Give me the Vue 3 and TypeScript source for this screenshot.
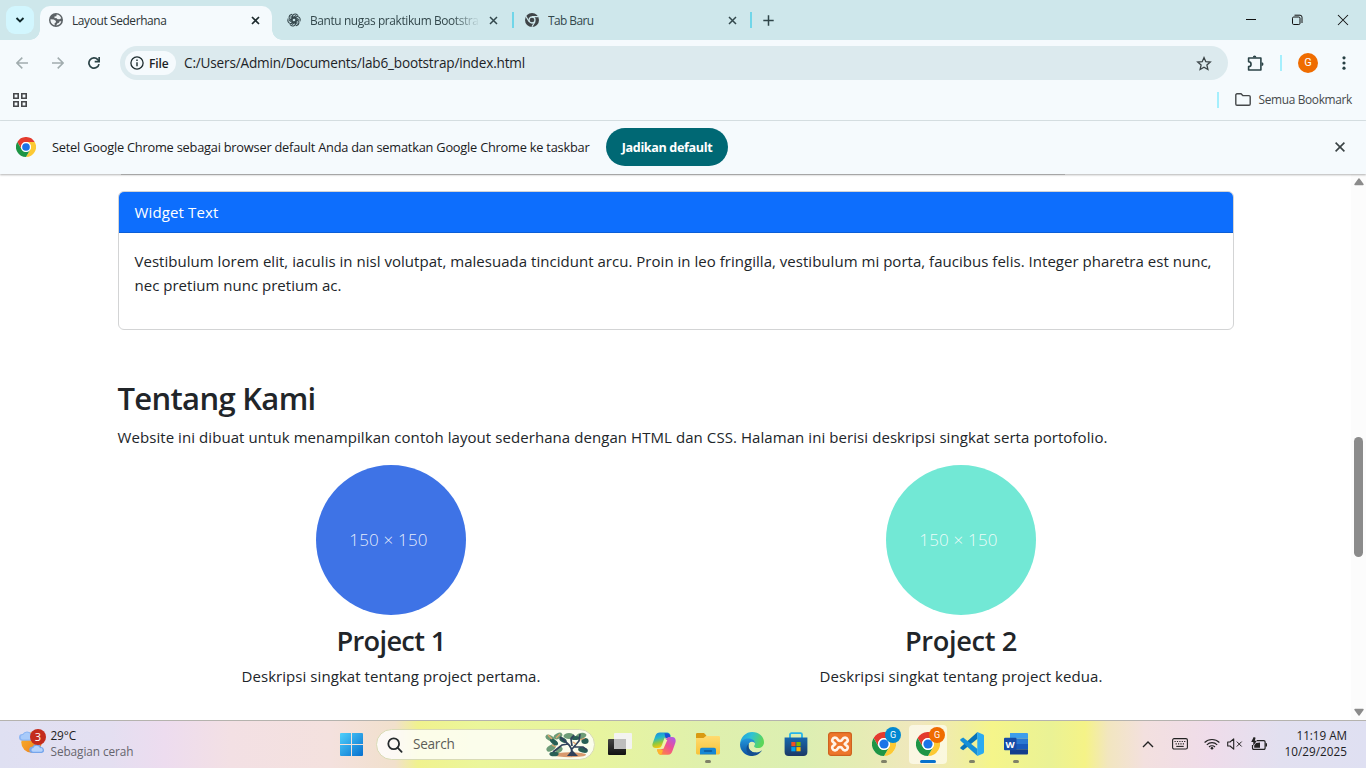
<script setup lang="ts">
import type { Directive } from 'vue'

// Spreads a line of text over a fixed advance width through its letter spacing.
const vFit: Directive<HTMLElement, number> = {
  mounted(el, { value }) {
    const natural = el.getBoundingClientRect().width
    const count = (el.textContent ?? '').length
    el.style.letterSpacing = `${((value - natural) / count).toFixed(4)}px`
  },
}

interface Project {
  title: string
  titleWidth: number
  text: string
  textWidth: number
  tone: string
}

const projects: Project[] = [
  { title: 'Project 1', titleWidth: 109, text: 'Deskripsi singkat tentang project pertama.', textWidth: 299, tone: 'blue' },
  { title: 'Project 2', titleWidth: 112, text: 'Deskripsi singkat tentang project kedua.', textWidth: 283, tone: 'mint' },
]

const chromes = [
  { letter: 'G', tone: 'sea', active: false },
  { letter: 'G', tone: 'orange', active: true },
]
</script>

<template>
  <div class="screen">
    <svg class="defs" width="0" height="0" aria-hidden="true">
      <defs>
        <symbol id="chrome" viewBox="0 0 48 48">
          <circle cx="24" cy="24" r="24" fill="#fff" />
          <path d="M3.2 12A24 24 0 0 1 44.8 12H24A12 12 0 0 0 13.6 30Z" fill="#e33b2e" />
          <path d="M44.8 12A24 24 0 0 1 24 48L34.4 30A12 12 0 0 0 24 12Z" fill="#fcc934" />
          <path d="M24 48A24 24 0 0 1 3.2 12L13.6 30A12 12 0 0 0 34.4 30Z" fill="#1e9545" />
          <circle cx="24" cy="24" r="11.8" fill="#fff" />
          <circle cx="24" cy="24" r="9.2" fill="#1a73e8" />
        </symbol>
        <linearGradient id="gWin" x1="0" y1="0" x2="1" y2="1">
          <stop offset="0" stop-color="#4fd0fb" /><stop offset="1" stop-color="#0670cf" />
        </linearGradient>
        <linearGradient id="gDark" x1="0" y1="0" x2="0" y2="1">
          <stop offset="0" stop-color="#444" /><stop offset="1" stop-color="#111" />
        </linearGradient>
        <linearGradient id="gCop1" x1="0" y1="0" x2="0.3" y2="1">
          <stop offset="0" stop-color="#1783e6" /><stop offset=".4" stop-color="#22b8c9" /><stop offset=".7" stop-color="#8fc93c" /><stop offset="1" stop-color="#fdc60a" />
        </linearGradient>
        <linearGradient id="gCop2" x1="1" y1="0" x2="0.2" y2="1">
          <stop offset="0" stop-color="#a45df0" /><stop offset=".5" stop-color="#ee4f94" /><stop offset="1" stop-color="#ff8a3c" />
        </linearGradient>
        <linearGradient id="gFold" x1="0" y1="0" x2="0" y2="1">
          <stop offset="0" stop-color="#ffdb70" /><stop offset="1" stop-color="#f8c33a" />
        </linearGradient>
        <linearGradient id="gEdge" x1="0" y1="0" x2="1" y2="0.3">
          <stop offset="0" stop-color="#1b9de0" /><stop offset=".5" stop-color="#2fc2d4" /><stop offset="1" stop-color="#5bd65a" />
        </linearGradient>
        <linearGradient id="gEdge2" x1="0" y1="0" x2="0" y2="1">
          <stop offset="0" stop-color="#2397dc" /><stop offset="1" stop-color="#0b4f9e" />
        </linearGradient>
        <linearGradient id="gStore" x1="0" y1="0" x2="0" y2="1">
          <stop offset="0" stop-color="#1668ae" /><stop offset="1" stop-color="#1c3966" />
        </linearGradient>
        <linearGradient id="gSun" x1="0" y1="0" x2="1" y2="1">
          <stop offset="0" stop-color="#f8b52c" /><stop offset="1" stop-color="#ee7a1c" />
        </linearGradient>
      </defs>
    </svg>

    <header class="tabs">
      <button class="tabsearch"><svg width="10" height="8" viewBox="0 0 10 8"><path d="M1.5 2 5 5.5 8.5 2" fill="none" stroke="#10292c" stroke-width="1.9" /></svg></button>
      <div class="tab active">
        <svg class="fav" width="14" height="14" viewBox="0 0 14 14">
          <circle cx="7" cy="7" r="7" fill="#5c6266" />
          <path d="M7.6 1.6C9.6 1.7 11.6 3 12.3 5.2L10.6 6.3H8.6L7.2 5 5.6 5.2 5.4 3.6 7.4 3.2Z" fill="#f0f4f6" />
          <path d="M1.5 6.3 4.8 6.6 7 7.9 6.8 9.4 5.6 10.2 5.7 12.3C3.2 11.8 1.3 9.4 1.5 6.3Z" fill="#f0f4f6" />
          <path d="M7.2 12.5 8.2 10.5 10 9.8 10.6 8.3H12.3C11.8 10.6 9.8 12.5 7.2 12.5Z" fill="#f0f4f6" />
        </svg>
        <span class="label"><span v-fit="94.5">Layout Sederhana</span></span>
        <svg class="x" width="9" height="9" viewBox="0 0 9 9"><path d="M1 1 8 8M8 1 1 8" stroke="#1d2b2e" stroke-width="1.7" /></svg>
      </div>
      <div class="tab second">
        <svg class="fav" width="14" height="14" viewBox="-7 -7 14 14" fill="none" stroke="#33454a" stroke-width="1.05">
          <g v-for="a in 6" :key="a" :transform="`rotate(${a * 60})`">
            <path d="M-1.8 3.1V-2.9A3 3 0 0 1 3.3 -5.1L4.2 -4.4M-1.8-2.2 2.2-4.6" />
          </g>
        </svg>
        <span class="label fade"><span v-fit="168.5">Bantu nugas praktikum Bootstra</span></span>
        <svg class="x" width="9" height="9" viewBox="0 0 9 9"><path d="M1 1 8 8M8 1 1 8" stroke="#33484c" stroke-width="1.5" /></svg>
      </div>
      <i class="sep"></i>
      <div class="tab third">
        <svg class="fav" width="14" height="14" viewBox="0 0 14 14">
          <circle cx="7" cy="7" r="7" fill="#3f4447" />
          <circle cx="7" cy="7" r="3" fill="none" stroke="#cee7eb" stroke-width="1.3" />
          <path d="M7 3.6H13.3M4 8.5.9 3.3M10 8.7 6.9 13.7" stroke="#cee7eb" stroke-width="1.2" />
        </svg>
        <span class="label"><span v-fit="45.5">Tab Baru</span></span>
        <svg class="x" width="9" height="9" viewBox="0 0 9 9"><path d="M1 1 8 8M8 1 1 8" stroke="#33484c" stroke-width="1.5" /></svg>
      </div>
      <i class="sep"></i>
      <svg class="plus" width="11" height="11" viewBox="0 0 11 11"><path d="M5.5.3V10.7M.3 5.5H10.7" stroke="#2f4549" stroke-width="1.5" /></svg>
      <div class="win">
        <svg class="min" width="10" height="12" viewBox="0 0 10 12"><path d="M0 5.5H10" stroke="#111" /></svg>
        <svg width="12" height="12" viewBox="0 0 12 12" fill="none" stroke="#111"><rect x="1.5" y="3" width="7.5" height="7.5" rx="1.2" /><path d="M3.5 1.2H9a2 2 0 0 1 2 2V9" /></svg>
        <svg width="12" height="12" viewBox="0 0 12 12"><path d="M1 1 11 11M11 1 1 11" stroke="#111" stroke-width="1.05" /></svg>
      </div>
    </header>

    <div class="toolbar">
      <svg class="nav" width="12" height="12" viewBox="0 0 12 12" fill="none" stroke="#a1acae" stroke-width="1.5"><path d="M6.3.6.9 6l5.4 5.4M1 6H12" /></svg>
      <svg class="nav" width="12" height="12" viewBox="0 0 12 12" fill="none" stroke="#a1acae" stroke-width="1.5"><path d="M5.7.6 11.1 6l-5.4 5.4M11 6H0" /></svg>
      <svg class="nav" width="12" height="12" viewBox="0 0 12 12" fill="none" stroke="#2b4347" stroke-width="1.7"><path d="M11 7.1A5.1 5.1 0 1 1 9.8 2.6L11 4.2" /><path d="M11.2 0V4.6H6.7" /></svg>
      <div class="omni">
        <div class="chip">
          <svg width="14" height="14" viewBox="0 0 14 14"><circle cx="7" cy="7" r="6.1" fill="none" stroke="#1c2b2e" stroke-width="1.3" /><path d="M7 6.2V10.2M7 3.6V5" stroke="#1c2b2e" stroke-width="1.4" /></svg>
          <span v-fit="19.5">File</span>
        </div>
        <span class="url"><span v-fit="341">C:/Users/Admin/Documents/lab6_bootstrap/index.html</span></span>
        <svg class="star" width="16" height="15" viewBox="0 0 16 15"><path d="M8 1.6 9.8 5.7 14.3 6.1 10.9 9.1 11.9 13.5 8 11.2 4.1 13.5 5.1 9.1 1.7 6.1 6.2 5.7Z" fill="none" stroke="#3b4447" stroke-width="1.3" /></svg>
      </div>
      <svg class="puzzle" width="17" height="17" viewBox="0 0 17 17"><path d="M1.6 3H13.9V15H1.6V11.6A2.2 2.2 0 0 0 1.6 6.7Z" fill="none" stroke="#2b4347" stroke-width="1.6" stroke-linejoin="round" /><path d="M5.8 2.4a1.8 1.8 0 0 1 3.6 0ZM14.6 7.2a1.9 1.9 0 0 1 0 3.8Z" fill="#2b4347" /></svg>
      <i class="sep pale"></i>
      <span class="avatar">G</span>
      <svg class="dots" width="4" height="14" viewBox="0 0 4 14" fill="#263f43"><circle cx="2" cy="1.8" r="1.6" /><circle cx="2" cy="7" r="1.6" /><circle cx="2" cy="12.2" r="1.6" /></svg>
    </div>

    <div class="bookmarks">
      <svg width="16" height="16" viewBox="0 0 16 16" fill="none" stroke="#46484b" stroke-width="1.6"><path d="M1.8 1.8H6.2V6.2H1.8ZM9.8 1.8H14.2V6.2H9.8ZM1.8 9.8H6.2V14.2H1.8ZM9.8 9.8H14.2V14.2H9.8Z" /></svg>
      <div class="allmarks">
        <i class="sep pale"></i>
        <svg width="16" height="13" viewBox="0 0 16 13"><path d="M.8 2A1.2 1.2 0 0 1 2 .8H6L7.8 2.6H14A1.2 1.2 0 0 1 15.2 3.8V11A1.2 1.2 0 0 1 14 12.2H2A1.2 1.2 0 0 1 .8 11Z" fill="none" stroke="#45484a" stroke-width="1.4" /></svg>
        <span v-fit="93.5">Semua Bookmark</span>
      </div>
    </div>

    <div class="infobar">
      <svg width="20" height="20"><use href="#chrome" /></svg>
      <span class="msg"><span v-fit="537.5">Setel Google Chrome sebagai browser default Anda dan sematkan Google Chrome ke taskbar</span></span>
      <button class="default"><span v-fit="90.5">Jadikan default</span></button>
      <svg class="close" width="10" height="10" viewBox="0 0 10 10"><path d="M.6.6 9.4 9.4M9.4.6.6 9.4" stroke="#3a4244" stroke-width="1.6" /></svg>
    </div>

    <div class="viewport">
      <main>
        <hr class="edge" />
        <section class="card">
          <h5><span v-fit="84">Widget Text</span></h5>
          <p>
            <span v-fit="1077">Vestibulum lorem elit, iaculis in nisl volutpat, malesuada tincidunt arcu. Proin in leo fringilla, vestibulum mi porta, faucibus felis. Integer pharetra est nunc,</span><br />
            <span v-fit="207">nec pretium nunc pretium ac.</span>
          </p>
        </section>
        <h2><span v-fit="198">Tentang Kami</span></h2>
        <p class="lead"><span v-fit="990">Website ini dibuat untuk menampilkan contoh layout sederhana dengan HTML dan CSS. Halaman ini berisi deskripsi singkat serta portofolio.</span></p>
        <div class="row">
          <article v-for="p in projects" :key="p.title">
            <div class="disc" :class="p.tone"><span v-fit="78.5">150 × 150</span></div>
            <h3><span v-fit="p.titleWidth">{{ p.title }}</span></h3>
            <p><span v-fit="p.textWidth">{{ p.text }}</span></p>
          </article>
        </div>
      </main>
      <div class="scroll">
        <svg width="10" height="8" viewBox="0 0 10 8"><path d="M5 1 9 6.5H1Z" fill="#8b8b8b" stroke="#8b8b8b" stroke-width="1.4" stroke-linejoin="round" /></svg>
        <i class="thumb"></i>
        <svg class="down" width="10" height="8" viewBox="0 0 10 8"><path d="M5 7 1 1.5H9Z" fill="#8b8b8b" stroke="#8b8b8b" stroke-width="1.4" stroke-linejoin="round" /></svg>
      </div>
    </div>

    <footer class="taskbar">
      <div class="weather">
        <svg width="28" height="28" viewBox="0 0 28 28">
          <circle cx="12.5" cy="15.5" r="10.2" fill="url(#gSun)" />
          <path d="M3.3 13.8A3.4 3.4 0 0 1 3.6 7 5 5 0 0 1 12.6 7.5 3.2 3.2 0 0 1 14 13.8Z" fill="#8cb6f4" />
          <path d="M3.7 12.6A2.3 2.3 0 0 1 4.2 8 4 4 0 0 1 11.8 8.5V12.6Z" fill="#a9cbfa" />
          <path d="M13.3 26A3.1 3.1 0 0 1 13.4 19.8 4.6 4.6 0 0 1 22 20.1 3 3 0 0 1 22.8 26Z" fill="#77a6ec" />
          <path d="M13.8 24.8A2 2 0 0 1 14.3 20.9 3.6 3.6 0 0 1 21.1 21.3 1.8 1.8 0 0 1 22.5 24.8Z" fill="#b5d3fc" />
        </svg>
        <b class="badge">3</b>
        <div class="wtext"><span v-fit="25.5">29°C</span><small v-fit="83">Sebagian cerah</small></div>
      </div>
      <svg class="start" width="23" height="23" viewBox="0 0 23 23"><path d="M0 1A1 1 0 0 1 1 0H11V11H0ZM12 0H22A1 1 0 0 1 23 1V11H12ZM0 12H11V23H1A1 1 0 0 1 0 22ZM12 12H23V22A1 1 0 0 1 22 23H12Z" fill="url(#gWin)" /></svg>
      <div class="search">
        <svg width="16" height="16" viewBox="0 0 16 16" fill="none" stroke="#262b2d" stroke-width="1.8"><circle cx="6.7" cy="6.7" r="5.4" /><path d="M10.6 10.7 14.6 14.8" stroke-linecap="round" /></svg>
        <span v-fit="41.5">Search</span>
        <svg class="tree" width="44" height="26" viewBox="0 0 44 26" fill="none">
          <ellipse cx="25" cy="22.8" rx="16" ry="2.5" fill="#d99a6e" />
          <g fill="#6d9c77"><ellipse cx="5" cy="6" rx="4.8" ry="2.8" transform="rotate(25 5 6)" /><ellipse cx="13" cy="4" rx="4.6" ry="2.8" transform="rotate(-25 13 4)" /><ellipse cx="6" cy="16" rx="5" ry="2.8" transform="rotate(-30 6 16)" /><ellipse cx="24" cy="4" rx="5.5" ry="3" /><ellipse cx="36" cy="4" rx="5.5" ry="3" transform="rotate(-15 36 4)" /><ellipse cx="14" cy="18" rx="4" ry="2.4" transform="rotate(-35 14 18)" /></g>
          <g fill="#285f55"><ellipse cx="9" cy="10" rx="4.6" ry="2.3" transform="rotate(35 9 10)" /><ellipse cx="30" cy="6" rx="4.5" ry="2" /><ellipse cx="40" cy="9" rx="3.6" ry="3" /><ellipse cx="38" cy="18" rx="5" ry="2.6" transform="rotate(15 38 18)" /><ellipse cx="9" cy="22" rx="4.6" ry="2.3" /><ellipse cx="18" cy="8" rx="4" ry="2.2" transform="rotate(30 18 8)" /></g>
          <path d="M26 24C28 19 27 15 22 11L15 5M27 17 34 9 35 2M27 14 26 7 29 3M29 15 38 15 42 18M23 12 17 13 8 20" stroke="#30415a" stroke-width="1.7" />
          <path d="M22 24 27 18 33 24Z" fill="#30415a" />
          <path d="M3 3 7 7M15 2 11 6M28 10 31 12M7 13 11 15M35 8 40 6" stroke="#e1a36e" stroke-width="1.3" />
        </svg>
      </div>
      <nav class="apps">
        <div class="app"><svg width="24" height="24" viewBox="0 0 24 24"><rect x="0" y="7" width="18" height="16" rx="1" fill="url(#gDark)" /><rect x="6" y="1" width="18" height="16" rx="1" fill="#f3f3f1" /><path d="M6 7H18V17H6Z" fill="#bdbdbd" /></svg></div>
        <div class="app">
          <svg width="24" height="24" viewBox="0 0 24 24">
            <path d="M8 1.3H15.2C17 1.3 17.8 2.6 18.3 4.2L19 6H15.8C13.8 6 12.8 7.2 12.2 9L9.7 17.2C9 19.3 8 20.2 6 20.2H3.8C.7 20.2-.2 17.4.7 14.3L3.5 5.2C4.3 2.7 5.6 1.3 8 1.3Z" transform="translate(0 -.7) scale(1 .83)" fill="url(#gCop1)" />
            <path d="M12.5 1.3H15.2C17 1.3 17.7 2.3 18.2 4L18.8 6H15.5L13.5 6.5Z" fill="#1c50d4" />
            <path d="M16 22.7H8.8C7 22.7 6.2 21.4 5.7 19.8L5 17.5H8C10 17.5 11 16.5 11.6 14.7L14.2 7.5C14.9 5.5 16 5 18 5H20.2C23.3 5 24.3 7.8 23.3 11L20.5 18.8C19.7 21.3 18.4 22.7 16 22.7Z" fill="url(#gCop2)" />
            <path d="M12.8 8H15.3L11.5 16.8H9.2Z" fill="#f1f3a7" />
            <path d="M5 17.2H8.2L11 18.5 9.2 22.7C7 22.7 6.3 21.4 5.7 19.8Z" fill="#ffb52c" />
          </svg>
        </div>
        <div class="app">
          <svg width="24" height="24" viewBox="0 0 24 24"><path d="M0 2.2A1.2 1.2 0 0 1 1.2 1H8L10.3 3.5V8H0Z" fill="#d99a11" /><path d="M0 6H7.5L10 4H22.8A1.2 1.2 0 0 1 24 5.2V21A1.4 1.4 0 0 1 22.6 22.4H1.4A1.4 1.4 0 0 1 0 21Z" fill="url(#gFold)" /><path d="M4 22.4V17.5A1.8 1.8 0 0 1 5.8 15.7H18.2A1.8 1.8 0 0 1 20 17.5V22.4Z" fill="#1787d3" /><rect x="7.8" y="18.3" width="8.4" height="1.5" rx=".7" fill="#0b549b" /></svg>
          <i class="dot"></i>
        </div>
        <div class="app">
          <svg width="24" height="24" viewBox="0 0 24 24"><path d="M.1 11.7C.7 4.8 6 0 12.2 0 19 0 24 4.8 24 10.2 24 13.8 21.4 16 18 16 15.6 16 14.1 15.2 14.1 14.2 14.1 13.5 15 13.3 15 11.7 15 9.5 12.8 7.7 9.8 7.7 5 7.7.9 10 .1 11.7Z" fill="url(#gEdge)" /><path d="M0 12.6C.2 9.3 3.7 6.6 8.4 6.6 12.8 6.6 15.2 9.1 15 11.6 14.8 10.5 13.4 9.8 12 9.8 9.7 9.8 8.2 11.7 8.2 14.2 8.2 18.4 12.3 21 16.5 20.5 15 22.8 13.2 24 11.5 24 5.2 24 0 18.8 0 12.6Z" fill="url(#gEdge2)" /><path d="M8.9 11.7C7.6 16.5 11 20.6 16.2 20.6 18.7 20.6 20.9 19.5 22.1 18.1 20.5 21.5 16.6 24 12 24 6 22.5 4.7 14.5 8.9 11.7Z" fill="#124f90" /></svg>
        </div>
        <div class="app">
          <svg width="24" height="24" viewBox="0 0 24 24"><path d="M6 8V2.6A1.4 1.4 0 0 1 7.4 1.2H16.6A1.4 1.4 0 0 1 18 2.6V8" fill="none" stroke="#25b5ea" stroke-width="1.8" /><path d="M.6 5.5H23.4V20A4 4 0 0 1 19.4 24H4.6A4 4 0 0 1 .6 20Z" fill="url(#gStore)" /><path d="M7.3 10H11.5V14.2H7.3Z" fill="#f25022" /><path d="M12.4 10H16.6V14.2H12.4Z" fill="#7fba00" /><path d="M7.3 15.1H11.5V19.3H7.3Z" fill="#00a4ef" /><path d="M12.4 15.1H16.6V19.3H12.4Z" fill="#ffb900" /></svg>
        </div>
        <div class="app">
          <svg width="24" height="24" viewBox="0 0 24 24"><rect x=".6" y=".6" width="22.8" height="22.8" rx="2.5" fill="#ed762b" stroke="#ce631f" stroke-width="1.2" /><path d="M7.2 5.6C4.4 5.4 3.2 9 5.4 10.3L7.3 12 5.4 13.7C3.2 15 4.4 18.6 7.2 18.4 8.6 18.4 9.2 17.5 9.8 16.3 10.5 14.7 13.5 14.7 14.2 16.3 14.8 17.5 15.4 18.4 16.8 18.4 19.6 18.6 20.8 15 18.6 13.7L16.7 12 18.6 10.3C20.8 9 19.6 5.4 16.8 5.6 15.4 5.6 14.8 6.5 14.2 7.7 13.5 9.3 10.5 9.3 9.8 7.7 9.2 6.5 8.6 5.6 7.2 5.6Z" fill="none" stroke="#fff4e8" stroke-width="2.6" stroke-linejoin="round" /></svg>
        </div>
        <div v-for="c in chromes" :key="c.tone" class="app" :class="{ current: c.active }">
          <svg width="24" height="24"><use href="#chrome" /></svg>
          <b class="gbadge" :class="c.tone">{{ c.letter }}</b>
          <i class="dot"></i>
        </div>
        <div class="app">
          <svg width="24" height="24" viewBox="0 0 24 24"><path d="M17.5 0V6.8L3.2 18.3.3 16.5V15.4Z" fill="#0873b9" /><path d="M.3 7.3 3.2 5.5 17.5 17V24L.3 8.6Z" fill="#168fd7" /><path d="M17.3 0 23.2 2.5A1.6 1.6 0 0 1 24 4V20A1.6 1.6 0 0 1 23.2 21.4L17.3 24Z" fill="#2aaaf2" /></svg>
          <i class="dot"></i>
        </div>
        <div class="app">
          <svg width="24" height="24" viewBox="0 0 24 24"><path d="M6 1H23A1 1 0 0 1 24 2V6.5H6Z" fill="#3f9eeb" /><path d="M6 6.5H24V12H6Z" fill="#2a78d2" /><path d="M6 12H24V17.3H6Z" fill="#185abd" /><path d="M6 17.3H24V21.5A1 1 0 0 1 23 22.5H6Z" fill="#123d8d" /><rect x="0" y="5.8" width="12.5" height="12.5" rx="1" fill="#164ba6" /><text x="6.2" y="15.7" text-anchor="middle" class="wletter">W</text></svg>
          <i class="dot"></i>
        </div>
      </nav>
      <div class="tray">
        <svg class="up" width="12" height="7" viewBox="0 0 12 7"><path d="M1 6 6 1.1 11 6" fill="none" stroke="#222" stroke-width="1.4" /></svg>
        <svg class="kbd" width="16" height="12" viewBox="0 0 16 12"><rect x=".6" y=".6" width="14.8" height="10.4" rx="1.5" fill="none" stroke="#222" stroke-width="1.1" /><path d="M2.5 3.5H13.5M3.6 5.8H12.8" stroke="#222" stroke-width="1.2" stroke-dasharray="1.2 1.2" /><path d="M4.3 8.4H11.7" stroke="#222" stroke-width="1.1" /></svg>
        <svg class="wifi" width="16" height="12" viewBox="0 0 16 12" fill="none" stroke="#222" stroke-width="1.1"><path d="M.6 4.5A10.5 10.5 0 0 1 15.4 4.5M2.8 6.8A7.4 7.4 0 0 1 13.2 6.8M5 9A4.2 4.2 0 0 1 11 9" /><circle cx="8" cy="10.2" r="1.3" fill="#222" stroke="none" /></svg>
        <svg class="vol" width="16" height="12" viewBox="0 0 16 12" fill="none" stroke="#222"><path d="M.7 4H3L6.7.8V11.2L3 8H.7Z" stroke-width="1.1" stroke-linejoin="round" /><path d="M9.8 3.6 14.7 8.5M14.7 3.6 9.8 8.5" /></svg>
        <svg class="bat" width="17" height="14" viewBox="0 0 17 14"><path d="M5.8 3.6H12.8A1.3 1.3 0 0 1 14.1 4.9V11A1.3 1.3 0 0 1 12.8 12.4H2.8A1.3 1.3 0 0 1 1.5 11V8" fill="none" stroke="#222" stroke-width="1.2" /><path d="M14.5 6.2H16V9.6H14.5ZM5 6 9 5.5V10.8H3.2V8.5ZM2.7 0 .2 5H2.3V8.8L5.9 3.7H3.8L4.6.8Z" fill="#222" /></svg>
        <div class="clock"><span v-fit="50.5">11:19 AM</span><span v-fit="62.5">10/29/2025</span></div>
      </div>
    </footer>
  </div>
</template>

<style>
html, body { margin: 0; overflow: hidden; }
</style>

<style scoped>
* { box-sizing: border-box; }
.screen { width: 1366px; height: 768px; display: flex; flex-direction: column; overflow: hidden; background: #fff; font-family: "Open Sans", "Noto Sans", sans-serif; color: #212529; }
.screen span { white-space: nowrap; }
svg { display: block; flex: none; }
.defs { position: absolute; }
button { border: 0; padding: 0; font: inherit; }
h2, h3, h5, p, hr { margin: 0; }
i, b { display: block; flex: none; font-style: normal; }

.tabs { height: 40px; flex: none; background: #cee7eb; display: flex; align-items: center; padding-left: 6px; font-size: 11.9px; }
.tabsearch { width: 28px; height: 28px; border-radius: 9px; background: #d2f6fe; display: grid; place-items: center; margin-right: 6px; }
.tab { display: flex; align-items: center; flex: none; height: 28px; color: #33484c; }
.tab .label { flex: 1; overflow: hidden; margin-left: 9px; line-height: 20px; }
.tab .label span { display: inline-block; }
.tab.active { width: 232px; height: 34px; align-self: flex-end; padding: 0 12px 6px 9px; border-radius: 10px 10px 0 0; background: #f5fafd; position: relative; color: #2b3436; }
.tab.active::before, .tab.active::after { content: ""; position: absolute; bottom: 0; width: 10px; height: 10px; }
.tab.active::before { left: -10px; background: radial-gradient(circle at 0 0, transparent 9.5px, #f5fafd 10px); }
.tab.active::after { right: -10px; background: radial-gradient(circle at 100% 0, transparent 9.5px, #f5fafd 10px); }
.tab.second { width: 240px; padding: 0 14px 0 15px; }
.tab.third { width: 236px; padding: 0 13px 0 11px; }
.tab.second .x { margin-left: 9px; }
.fade { -webkit-mask-image: linear-gradient(90deg, #000 84%, transparent 100%); mask-image: linear-gradient(90deg, #000 84%, transparent 100%); }
.sep { width: 2px; height: 16px; background: #70d6e9; }
.sep.pale { background: #a5effd; }
.plus { margin-left: 11px; }
.win { margin-left: auto; display: flex; gap: 34px; align-items: center; padding-right: 17px; }
.min { margin-right: 1px; }

.toolbar { height: 46px; flex: none; background: linear-gradient(#f5fafd, #f5fafd); display: flex; align-items: center; padding-left: 16px; }
.nav { margin-right: 24px; }
.omni { width: 1108px; height: 34px; margin: 0 19px 0 -4px; border-radius: 17px; background: #dceaee; display: flex; align-items: center; padding: 0 16px 0 5px; color: #1c2326; }
.chip { width: 51px; height: 24px; border-radius: 12px; background: #f5fafd; display: flex; align-items: center; gap: 5px; padding-left: 5px; font-size: 12px; font-weight: 600; }
.url { margin: -1px 0 0 8px; font-size: 13.6px; flex: 1; }
.url span { display: inline-block; }
.puzzle { margin-right: 16px; }
.avatar { width: 20px; height: 20px; border-radius: 50%; background: #ef6c00; color: #fff; font: 11px/20px Roboto, sans-serif; text-align: center; margin: 0 24px 0 16px; }

.bookmarks { height: 35px; flex: none; background: #f5fafd; border-bottom: 1px solid #d9e2e5; display: flex; align-items: center; justify-content: space-between; padding: 0 14px 7px 12px; font-size: 11.9px; color: #45494b; }
.allmarks { display: flex; align-items: center; }
.allmarks .sep { margin-right: 16px; }
.allmarks svg { margin-right: 8px; }
.allmarks span { margin-top: -1px; }

.infobar { height: 53px; flex: none; background: #f5fafd; display: flex; align-items: center; padding: 0 21px 1px 16px; font-size: 12.8px; color: #1a2022; position: relative; z-index: 2; box-shadow: 0 1px 2px rgba(0, 0, 0, .3); }
.msg { width: 538px; margin: 0 16px; }
.msg span { display: inline-block; }
.default { width: 122px; height: 38px; border-radius: 19px; background: #006874; color: #fff; font-weight: 700; font-size: 12.6px; text-align: center; }
.close { margin-left: auto; }

.viewport { flex: 1; min-height: 0; display: flex; background: #fff; }
main { flex: 1; padding: 0 117px 0 118px; font-size: 15px; line-height: 24px; }
main span { display: inline-block; }
.edge { border: 0; width: 944px; height: 1px; margin: 0 0 16px 3px; background: #a6a6a6; position: relative; z-index: 3; }
.card { border: 1px solid #d3d4d5; border-radius: 6px; height: 139px; overflow: hidden; }
.card h5 { height: 41px; padding: 8px 15.5px; background: #0d6efd; border-bottom: 1px solid #0b5ed7; color: #fff; font-weight: 400; font-size: 15px; line-height: 24px; }
.card p { padding: 16px 15.5px; }
h2 { margin: 49px 0 0 -.5px; height: 38px; line-height: 38px; font-size: 31px; font-weight: 600; }
.lead { margin: 8px 0 0 -.5px; }
.row { display: grid; grid-template-columns: 1fr 1fr; margin: 16px -12px 0; }
article { text-align: center; }
.disc { width: 150px; height: 150px; border-radius: 50%; margin: 0 auto; display: grid; place-items: center; padding-right: 5px; color: rgba(255, 255, 255, .88); font-size: 17px; font-weight: 300; }
.disc.blue { background: #3e73e6; }
.disc.mint { background: #72e8d5; }
h3 { margin: 9px 0 7px; height: 33px; line-height: 33px; font-size: 27.2px; font-weight: 600; }
.scroll { width: 15px; background: #fcfcfc; display: flex; flex-direction: column; align-items: center; padding: 4px 0; }
.thumb { width: 9px; height: 120px; border-radius: 5px; background: #8b8b8b; margin-top: 251px; }
.down { margin-top: auto; }

.taskbar { height: 48px; flex: none; border-top: 1px solid #b5b3ae; display: flex; align-items: center; background: linear-gradient(90deg, #dfe0f2 0, #e4dff1 110px, #eddcef 165px, #f3e0e4 230px, #f4e1de 330px, #f1e0cc 395px, #f0f28e 418px, #ebf69b 480px, #e7f49f 600px, #dff0ad 710px, #dcefb2 800px, #e5ecb4 860px, #f1e7bd 920px, #f0efa0 965px, #f5f58a 992px, #eaf295 1050px, #f5f387 1085px, #f2e6bf 1108px, #f3e0df 1145px, #efdcea 1210px, #e2e0f0 1280px, #dfe0f2 1366px); }
.weather { width: 340px; padding-left: 18px; display: flex; align-items: center; position: relative; }
.weather svg { margin-top: -7px; margin-left: .5px; }
.badge { position: absolute; left: 30px; top: -2px; width: 16px; height: 16px; border-radius: 50%; background: #c42b1c; color: #fff; font-size: 11px; line-height: 16px; font-weight: 400; text-align: center; }
.wtext { margin: -4px 0 0 4px; display: flex; flex-direction: column; align-items: flex-start; font-size: 11.8px; line-height: 16px; color: #1e1e22; }
.wtext small { font-size: 11.8px; color: #66656d; white-space: nowrap; }
.search { width: 219px; height: 31px; margin-left: 13px; border: 1px solid #d9dbb5; border-radius: 16px; background: rgba(255, 255, 255, .8); display: flex; align-items: center; padding: 0 5px 0 10px; font-size: 13.6px; color: #5d5d58; }
.search span { margin: -2px 0 0 10px; }
.tree { margin-left: auto; }
.apps { display: flex; margin-left: 3px; }
.app { width: 44px; height: 39px; display: grid; place-items: center; position: relative; padding-bottom: 1px; }
.app.current::before { content: ""; position: absolute; inset: 0 3px; border-radius: 4px; background: rgba(255, 253, 245, .68); }
.app svg { position: relative; }
.dot { position: absolute; left: 19px; bottom: 1px; width: 6px; height: 3px; border-radius: 2px; background: #7f8168; }
.current .dot { left: 14px; width: 16px; background: #0872cd; }
.gbadge { position: absolute; left: 23px; top: 2px; width: 16px; height: 16px; border-radius: 50%; color: #fff; font: 400 9px/16px Roboto, sans-serif; text-align: center; }
.gbadge.sea { background: #0288d1; }
.gbadge.orange { background: #ef6c00; }
.wletter { font: 700 9.5px "Open Sans", sans-serif; fill: #fff; }
.tray { margin-left: auto; padding-right: 19px; display: flex; align-items: center; }
.tray > svg { margin-top: -1px; }
.kbd { margin-left: 18px; }
.wifi { margin-left: 16px; }
.vol { margin-left: 7px; }
.bat { margin-left: 8px; }
.clock { width: 79px; margin-top: -4px; display: flex; flex-direction: column; align-items: flex-end; font-size: 11.7px; line-height: 16px; color: #202024; }
</style>
